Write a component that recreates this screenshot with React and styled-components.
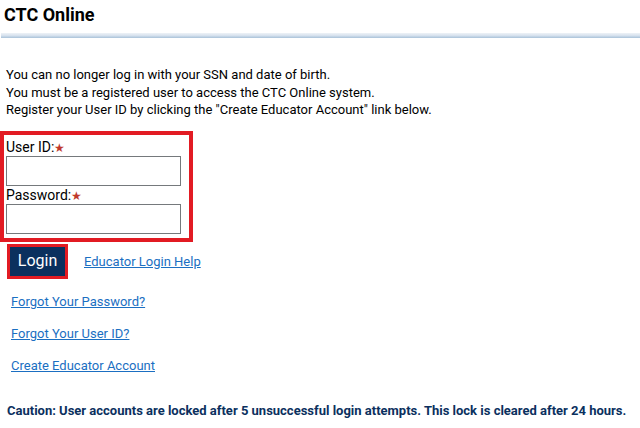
import React from 'react';
import styled, { createGlobalStyle } from 'styled-components';

const GlobalStyle = createGlobalStyle`
  html, body {
    margin: 0;
    padding: 0;
    background: #fff;
  }
  body {
    font-family: Roboto, "Liberation Sans", Arial, sans-serif;
    color: #000;
  }
`;

const Page = styled.div`
  width: 640px;
  height: 428px;
  overflow: hidden;
`;

const Header = styled.div`
  padding: 5px 0 0 4px;
  height: 28px;
  box-sizing: border-box;
`;

const Title = styled.h1`
  margin: 0;
  font-size: 18px;
  font-weight: 700;
  line-height: 20px;
`;

const Rule = styled.div`
  margin: 5px 0 0 1px;
  height: 5px;
  background: linear-gradient(#eef2f7, #d7e2ee 50%, #a9c2d9);
`;

const Content = styled.div`
  padding: 28px 0 0 6px;
`;

const Intro = styled.p`
  margin: 0;
  font-size: 13px;
  line-height: 17.5px;
`;

const Credentials = styled.div`
  margin: 12px 0 0 -6px;
  width: 193px;
  box-sizing: border-box;
  border: 4px solid #e21b23;
  padding: 3px 0 4px 2px;
`;

const Label = styled.label`
  display: block;
  height: 18px;
  font-size: 14px;
  line-height: 18px;
`;

const Star = styled.span`
  color: #c0392b;
  font-size: 12px;
  line-height: 0;
`;

const Field = styled.input`
  display: block;
  width: 175px;
  height: 30px;
  box-sizing: border-box;
  border: 1px solid #75797c;
  margin: 0;
  padding: 0 4px;
  font: inherit;
`;

const Actions = styled.div`
  display: flex;
  align-items: center;
  gap: 16px;
  margin: 2px 0 0 1px;
`;

const LoginButton = styled.button`
  width: 61px;
  height: 35px;
  box-sizing: border-box;
  border: 3px solid #e21b23;
  background: #0b305e;
  color: #fff;
  font-family: Roboto, "Liberation Sans", Arial, sans-serif;
  font-size: 16px;
  padding: 0 0 1px;
  cursor: pointer;
`;

const Link = styled.a`
  color: #1b6fc2;
  font-size: 13px;
  text-decoration: underline;
  cursor: pointer;
`;

const LinkList = styled.div`
  display: flex;
  flex-direction: column;
  gap: 14px;
  margin: 14px 0 0 5px;
  line-height: 18px;
`;

const Caution = styled.p`
  margin: 28px 0 0 1px;
  font-size: 13px;
  font-weight: 700;
  color: #0b305e;
  line-height: 16px;
`;

export default function App() {
  return (
    <Page>
      <GlobalStyle />
      <Header>
        <Title>CTC Online</Title>
      </Header>
      <Rule />
      <Content>
        <Intro>
          You can no longer log in with your SSN and date of birth.<br />
          You must be a registered user to access the CTC Online system.<br />
          Register your User ID by clicking the "Create Educator Account" link below.
        </Intro>
        <Credentials>
          <Label htmlFor="uid">User ID:<Star>★</Star></Label>
          <Field id="uid" type="text" />
          <Label htmlFor="pwd">Password:<Star>★</Star></Label>
          <Field id="pwd" type="password" />
        </Credentials>
        <Actions>
          <LoginButton>Login</LoginButton>
          <Link>Educator Login Help</Link>
        </Actions>
        <LinkList>
          <Link>Forgot Your Password?</Link>
          <Link>Forgot Your User ID?</Link>
          <Link>Create Educator Account</Link>
        </LinkList>
        <Caution>
          Caution: User accounts are locked after 5 unsuccessful login attempts. This lock is cleared after 24 hours.
        </Caution>
      </Content>
    </Page>
  );
}
